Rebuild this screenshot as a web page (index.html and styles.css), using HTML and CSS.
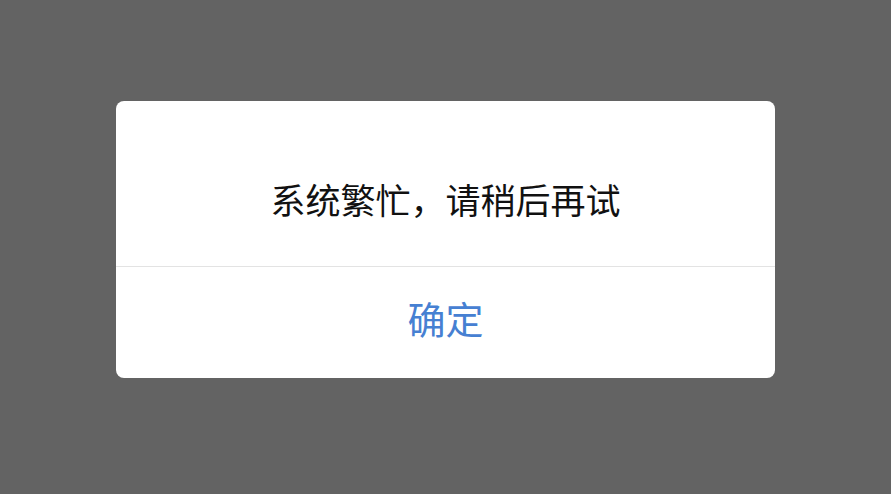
FILE: index.html
```html
<!DOCTYPE html>
<html lang="zh">
<head>
<meta charset="utf-8">
<link rel="stylesheet" href="styles.css">
</head>
<body>
<div class="overlay">
  <div class="dialog">
    <div class="message">系统繁忙，请稍后再试</div>
    <div class="actions"><span class="ok">确定</span></div>
  </div>
</div>
</body>
</html>
```
FILE: styles.css
```css
html, body {
  margin: 0;
  padding: 0;
  width: 891px;
  height: 494px;
  background: #636363;
  overflow: hidden;
  font-family: "Noto Sans CJK SC", "Noto Sans", sans-serif;
}
.overlay {
  display: flex;
  justify-content: center;
  padding-top: 101px;
}
.dialog {
  width: 659px;
  height: 277px;
  background: #ffffff;
  border-radius: 8px;
  display: flex;
  flex-direction: column;
  overflow: hidden;
}
.message {
  height: 166px;
  display: flex;
  align-items: center;
  justify-content: center;
  font-size: 35px;
  color: #111111;
  border-bottom: 1px solid #e3e3e3;
  box-sizing: border-box;
  padding-top: 30px;
}
.actions {
  flex: 1;
  display: flex;
  align-items: center;
  justify-content: center;
}
.ok {
  font-size: 38px;
  color: #4680d2;
  margin-top: -10px;
}
```
